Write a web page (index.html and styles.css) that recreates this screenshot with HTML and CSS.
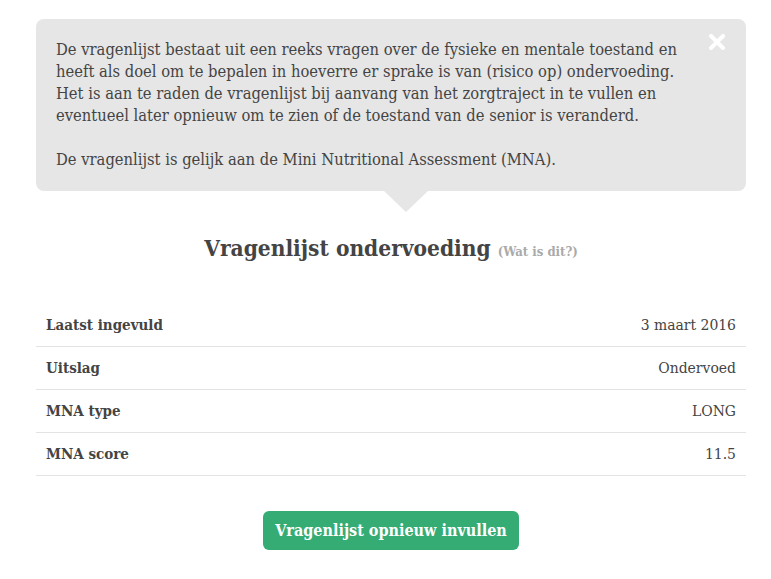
FILE: index.html
```html
<!DOCTYPE html>
<html lang="nl">
<head>
    <meta charset="UTF-8">
    <title>Vragenlijst ondervoeding</title>
    <link rel="stylesheet" href="styles.css">
</head>
<body>
    <div class="container">
        <div class="info-popup">
            <span class="close">
                <svg width="16" height="16" viewBox="0 0 16 16"><path d="M2 2 L14 14 M14 2 L2 14" stroke="#fff" stroke-width="4" stroke-linecap="square"/></svg>
            </span>
            <p>De vragenlijst bestaat uit een reeks vragen over de fysieke en mentale toestand en heeft als doel om te bepalen in hoeverre er sprake is van (risico op) ondervoeding. Het is aan te raden de vragenlijst bij aanvang van het zorgtraject in te vullen en eventueel later opnieuw om te zien of de toestand van de senior is veranderd.</p>
            <p>De vragenlijst is gelijk aan de Mini Nutritional Assessment (MNA).</p>
        </div>

        <h2>Vragenlijst ondervoeding <a href="#" class="what">(Wat is dit?)</a></h2>

        <table class="details">
            <tr><th>Laatst ingevuld</th><td>3 maart 2016</td></tr>
            <tr><th>Uitslag</th><td>Ondervoed</td></tr>
            <tr><th>MNA type</th><td>LONG</td></tr>
            <tr><th>MNA score</th><td>11.5</td></tr>
        </table>

        <div class="actions">
            <button>Vragenlijst opnieuw invullen</button>
        </div>
    </div>
</body>
</html>
```

FILE: styles.css
```css
body {
    margin: 0;
    padding: 19px 25px 0 36px;
    font-family: 'DejaVu Serif Condensed', 'DejaVu Serif', serif;
    color: #444;
    background: #fff;
}

.info-popup {
    position: relative;
    background: #e6e6e6;
    border-radius: 8px;
    padding: 20px 60px 20px 20px;
    font-size: 16.4px;
    line-height: 22px;
}

.info-popup p {
    margin: 0 0 22px;
}

.info-popup p:last-of-type {
    margin-bottom: 0;
}

.info-popup::after {
    content: '';
    position: absolute;
    left: 50%;
    bottom: -21px;
    margin-left: -7px;
    border-left: 22px solid transparent;
    border-right: 22px solid transparent;
    border-top: 21px solid #e6e6e6;
}

.close {
    position: absolute;
    top: 15px;
    right: 21px;
    line-height: 0;
    cursor: pointer;
}

h2 {
    text-align: center;
    font-size: 22.5px;
    margin: 44px 0 43px;
    color: #444;
}

.what {
    font-size: 13px;
    color: #aaa;
    text-decoration: none;
}

.details {
    width: 100%;
    border-collapse: collapse;
    font-size: 15px;
}

.details th,
.details td {
    padding: 11px 10px;
    border-bottom: 1px solid #e3e3e3;
    line-height: 20px;
}

.details th {
    text-align: left;
}

.details td {
    text-align: right;
    font-size: 15.5px;
}

.actions {
    text-align: center;
    margin-top: 35px;
}

button {
    background: #34ac74;
    color: #fff;
    border: none;
    border-radius: 6px;
    padding: 10px 12px;
    font-family: inherit;
    font-size: 16px;
    font-weight: bold;
    line-height: 19px;
    cursor: pointer;
}
```
